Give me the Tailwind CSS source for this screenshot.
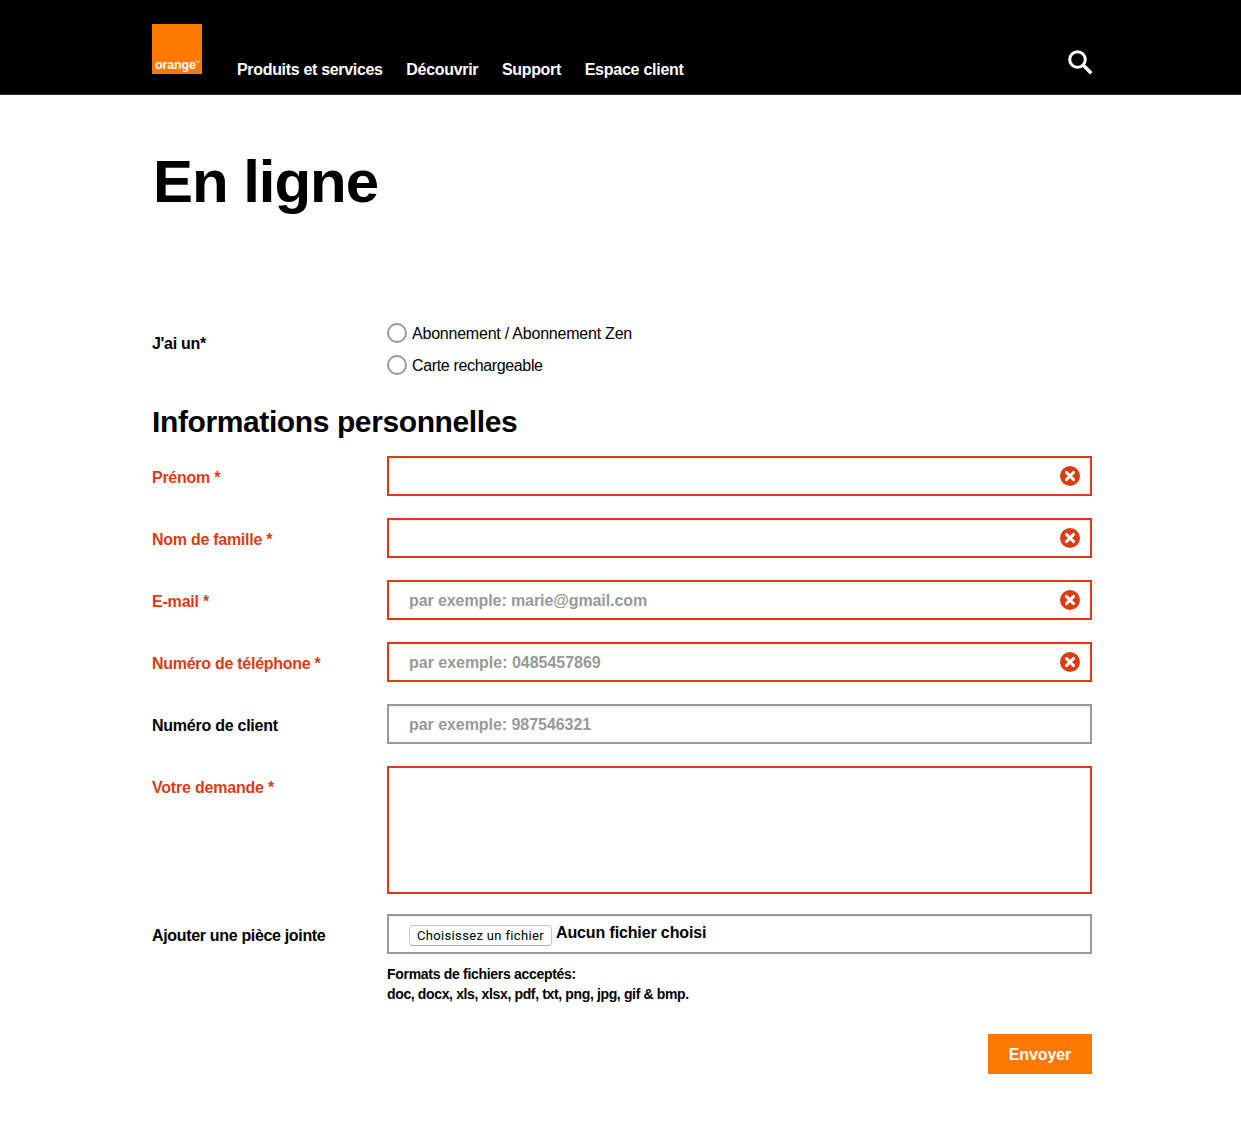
<!DOCTYPE html>
<html lang="fr">
<head>
<meta charset="utf-8">
<title>En ligne</title>
<script src="https://cdn.jsdelivr.net/npm/@tailwindcss/browser@4"></script>
</head>
<body class="bg-white text-black text-base font-['Liberation_Sans',Arial,sans-serif] min-h-[1138px] overflow-x-hidden">
<svg class="hidden"><symbol id="error" viewBox="0 0 20 20"><circle cx="10" cy="10" r="10" fill="#dc3c14"/><path d="M6.5 6.5 13.5 13.5M13.5 6.5 6.5 13.5" stroke="#fff" stroke-width="3.1" stroke-linecap="round"/></symbol></svg>
<header class="h-[95px] bg-black border-b border-[#333]">
  <div class="ml-[152px] w-[940px] flex items-start pt-6">
    <div class="w-[50px] h-[50px] bg-[#ff7900] text-white flex items-end pl-[3px] pb-[1px]">
      <span class="font-bold text-[12.5px] leading-[15px] tracking-[-0.15px]">orange</span><span class="text-[5px] leading-[5px] mb-[8px] -ml-px">™</span>
    </div>
    <nav class="ml-[35px] mt-[36px] flex gap-[23.7px] font-bold text-white leading-5 tracking-[-0.32px] whitespace-nowrap">
      <a>Produits et services</a><a>Découvrir</a><a>Support</a><a class="tracking-[-0.25px]">Espace client</a>
    </nav>
    <svg class="ml-auto -mr-px mt-[26px] w-[25px] h-[25px]" viewBox="0 0 25 25" fill="none" stroke="#fff"><circle cx="9.5" cy="9.5" r="7.8" stroke-width="3"/><path d="M15 15 23.3 23.3" stroke-width="3.6"/></svg>
  </div>
</header>
<main class="ml-[152px] w-[940px]">
  <h1 class="pt-[53px] text-[60px] leading-[68px] font-bold tracking-[-1.05px] pl-px">En ligne</h1>
  <div class="mt-[107px] flex">
    <div class="w-[235px] pt-[11px] font-bold leading-5 tracking-[-0.3px]">J'ai un*</div>
    <div class="flex flex-col gap-3 leading-[22px] h-[52px]">
      <label class="flex h-5 gap-[5px] tracking-[-0.22px]"><span class="size-5 rounded-full border-2 border-[#999]"></span>Abonnement / Abonnement Zen</label>
      <label class="flex h-5 gap-[5px] tracking-[-0.35px]"><span class="size-5 rounded-full border-2 border-[#999]"></span>Carte rechargeable</label>
    </div>
  </div>
  <h2 class="mt-[29px] text-[30px] leading-9 font-bold tracking-[-0.39px]">Informations personnelles</h2>
  <form class="mt-[16px] font-bold">
    <div class="flex h-[62px] items-start"><label class="w-[235px] pt-3 leading-5 tracking-[-0.27px] text-[#dc3c14]">Prénom *</label><div class="w-[705px] h-10 border-2 border-[#dc3c14] shadow-[inset_0_1px_1px_#00000013] flex items-center pr-[10px]"><input class="flex-1 outline-none pl-5"><svg class="size-5"><use href="#error"/></svg></div></div>
    <div class="flex h-[62px] items-start"><label class="w-[235px] pt-3 leading-5 tracking-[-0.27px] text-[#dc3c14]">Nom de famille *</label><div class="w-[705px] h-10 border-2 border-[#dc3c14] shadow-[inset_0_1px_1px_#00000013] flex items-center pr-[10px]"><input class="flex-1 outline-none pl-5"><svg class="size-5"><use href="#error"/></svg></div></div>
    <div class="flex h-[62px] items-start"><label class="w-[235px] pt-3 leading-5 tracking-[-0.2px] text-[#dc3c14]">E-mail *</label><div class="w-[705px] h-10 border-2 border-[#dc3c14] shadow-[inset_0_1px_1px_#00000013] flex items-center pr-[10px]"><input class="flex-1 outline-none pt-[2px] pl-5 tracking-[-0.09px] placeholder:text-[#999]" placeholder="par exemple: marie@gmail.com"><svg class="size-5"><use href="#error"/></svg></div></div>
    <div class="flex h-[62px] items-start"><label class="w-[235px] pt-3 leading-5 tracking-[-0.27px] text-[#dc3c14]">Numéro de téléphone *</label><div class="w-[705px] h-10 border-2 border-[#dc3c14] shadow-[inset_0_1px_1px_#00000013] flex items-center pr-[10px]"><input class="flex-1 outline-none pt-[2px] pl-5 tracking-[-0.02px] placeholder:text-[#999]" placeholder="par exemple: 0485457869"><svg class="size-5"><use href="#error"/></svg></div></div>
    <div class="flex h-[62px] items-start"><label class="w-[235px] pt-3 leading-5 tracking-[-0.25px]">Numéro de client</label><div class="w-[705px] h-10 border-2 border-[#999] shadow-[inset_0_1px_1px_#00000013] flex items-center pr-[10px]"><input class="flex-1 outline-none pt-[2px] pl-5 tracking-[-0.05px] placeholder:text-[#999]" placeholder="par exemple: 987546321"></div></div>
    <div class="flex h-[148px] items-start"><label class="w-[235px] pt-3 leading-5 tracking-[-0.2px] text-[#dc3c14]">Votre demande *</label><textarea class="w-[705px] h-32 border-2 border-[#dc3c14] resize-none outline-none"></textarea></div>
    <div class="flex items-start"><label class="w-[235px] pt-3 leading-5 tracking-[-0.33px]">Ajouter une pièce jointe</label>
      <div>
        <div class="w-[705px] h-10 border-2 border-[#999] shadow-[inset_0_1px_1px_#00000013] flex items-start pl-5">
          <button type="button" class="mt-[9px] w-[143px] h-[21px] rounded-[4px] border border-[#c8c8c8] border-b-[#aaa] font-['Roboto',sans-serif] font-normal text-[13px] leading-[19px] tracking-[0.35px] whitespace-nowrap">Choisissez un fichier</button>
          <span class="ml-1 mt-[7px] leading-5 tracking-[-0.13px]">Aucun fichier choisi</span>
        </div>
        <p class="mt-[10px] text-sm leading-5 tracking-[-0.3px]">Formats de fichiers acceptés:<br><span class="tracking-[-0.36px]">doc, docx, xls, xlsx, pdf, txt, png, jpg, gif &amp; bmp.</span></p>
      </div>
    </div>
    <div class="mt-[30px] flex justify-end"><button type="button" class="w-[104px] h-10 pt-[2px] bg-[#ff7900] text-white tracking-[-0.1px]">Envoyer</button></div>
  </form>
</main>
</body>
</html>
